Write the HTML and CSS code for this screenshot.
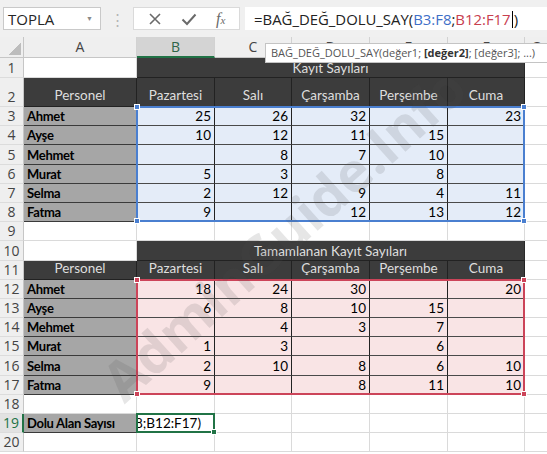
FILE: index.html
```html
<!DOCTYPE html>
<html lang="tr">
<head>
    <meta charset="UTF-8">
    <title>BAĞ_DEĞ_DOLU_SAY</title>
    <meta name="viewport" content="width=device-width, initial-scale=1.0">
    <link rel="stylesheet" href="styles.css">
</head>
<body>
    <div class="formula-bar">
        <div class="name-box">
            <span>TOPLA</span>
            <span class="name-arrow">▼</span>
        </div>
        <div class="grip">⋮</div>
        <div class="fx-buttons">
            <svg width="14" height="14" viewBox="0 0 14 14">
                <path d="M2 2 L12 12 M12 2 L2 12" stroke="#6a6a6a" stroke-width="1.6" fill="none"/>
            </svg>
            <svg width="16" height="14" viewBox="0 0 16 14">
                <path d="M1.5 7.5 L6 12 L14.5 2.5" stroke="#6a6a6a" stroke-width="2" fill="none"/>
            </svg>
            <span class="fx">f<span class="fx-x">x</span></span>
        </div>
        <div class="formula-input">
            <span>=BAĞ_DEĞ_DOLU_SAY(<span class="ref-blue">B3:F8</span>;<span class="ref-red">B12:F17</span><span class="caret"></span>)</span>
        </div>
    </div>

    <div class="sheet">
        <div class="cells" id="cells"></div>

        <!-- formül düzenlenirken renkli aralık çerçeveleri -->
        <div class="marks">
            <div class="range range-blue">
                <i class="h tl"></i><i class="h tr"></i><i class="h bl"></i><i class="h br"></i>
            </div>
            <div class="range range-red">
                <i class="h tl"></i><i class="h tr"></i><i class="h bl"></i><i class="h br"></i>
            </div>
            <div class="range range-active">
                <i class="h br"></i>
            </div>
        </div>

        <div class="tooltip">BAĞ_DEĞ_DOLU_SAY(değer1; <b>[değer2]</b>; [değer3]; ...)</div>
        <div class="watermark">AdminGuide.Info</div>
    </div>

    <script>
        const days = ['Pazartesi', 'Salı', 'Çarşamba', 'Perşembe', 'Cuma'];
        const tables = [
            {
                title: 'Kayıt Sayıları',
                tint: 'blue',
                rows: [
                    ['Ahmet', 25, 26, 32, '', 23],
                    ['Ayşe', 10, 12, 11, 15, ''],
                    ['Mehmet', '', 8, 7, 10, ''],
                    ['Murat', 5, 3, '', 8, ''],
                    ['Selma', 2, 12, 9, 4, 11],
                    ['Fatma', 9, '', 12, 13, 12]
                ]
            },
            {
                title: 'Tamamlanan Kayıt Sayıları',
                tint: 'pink',
                rows: [
                    ['Ahmet', 18, 24, 30, '', 20],
                    ['Ayşe', 6, 8, 10, 15, ''],
                    ['Mehmet', '', 4, 3, 7, ''],
                    ['Murat', 1, 3, '', 6, ''],
                    ['Selma', 2, 10, 8, 6, 10],
                    ['Fatma', 9, '', 8, 11, 10]
                ]
            }
        ];

        const grid = document.getElementById('cells');
        let rowNo = 0;

        function add(cls, text) {
            const el = document.createElement('div');
            el.className = 'cell ' + cls;
            if (text !== undefined && text !== '') {
                el.textContent = text;
            }
            grid.appendChild(el);
            return el;
        }

        function newRow(extra) {
            rowNo++;
            add('row-head' + (extra ? ' ' + extra : ''), rowNo);
        }

        function blankRow() {
            newRow();
            for (let i = 0; i < 6; i++) add('blank');
            add('blank last');
        }

        // sütun başlıkları
        add('corner').innerHTML = '<span class="corner-tri"></span>';
        ['A', 'B', 'C', 'D', 'E', 'F', 'G'].forEach(c => {
            add('col-head' + (c === 'B' ? ' sel' : '') + (c === 'G' ? ' last' : ''), c);
        });

        tables.forEach((t, i) => {
            if (i > 0) blankRow();
            newRow();
            add('blank');
            add('title', t.title);
            add('blank last');

            newRow('tall');
            add('head', 'Personel');
            days.forEach(d => add('head', d));
            add('blank last');

            t.rows.forEach(r => {
                newRow();
                add('name', r[0]);
                r.slice(1).forEach(v => add('num ' + t.tint, v));
                add('blank last');
            });
        });

        blankRow();

        newRow('active');
        add('name', 'Dolu Alan Sayısı');
        add('editing').innerHTML = '<span>=BAĞ_DEĞ_DOLU_SAY(B3:F8;B12:F17)</span>';
        for (let i = 0; i < 4; i++) add('blank');
        add('blank last');

        blankRow();
    </script>
</body>
</html>
```

FILE: styles.css
```css
* {
    box-sizing: border-box;
}
body {
    margin: 0;
    width: 547px;
    height: 454px;
    overflow: hidden;
    background: #fff;
    font-family: "Open Sans", "Noto Sans", sans-serif;
}

/* formül çubuğu */
.formula-bar {
    display: flex;
    align-items: center;
    height: 37px;
    padding-left: 3px;
    background: #f0f0f0;
}
.name-box {
    display: flex;
    align-items: center;
    justify-content: space-between;
    width: 98px;
    height: 23px;
    padding: 0 7px 0 4px;
    background: #fff;
    border: 1px solid #c9c9c9;
    font-size: 15px;
    color: #262626;
}
.name-arrow {
    font-size: 7px;
    color: #8a8a8a;
}
.grip {
    width: 32px;
    text-align: center;
    font-size: 15px;
    color: #b5b5b5;
}
.fx-buttons {
    display: flex;
    align-items: center;
    justify-content: space-around;
    width: 107px;
    height: 23px;
    padding: 0 4px;
    background: #fff;
    border: 1px solid #dadada;
}
.fx {
    font-family: "Liberation Serif", serif;
    font-style: italic;
    font-size: 16px;
    color: #6a6a6a;
}
.fx-x {
    font-size: 11px;
}
.formula-input {
    flex: 1;
    display: flex;
    align-items: center;
    height: 23px;
    margin-left: 5px;
    padding-left: 9px;
    background: #fff;
    font-size: 14.9px;
    color: #222;
    white-space: nowrap;
}
.ref-blue {
    color: #3f6fc7;
}
.ref-red {
    color: #c8404f;
}
.caret {
    display: inline-block;
    width: 1px;
    height: 17px;
    margin: 0 1px -3px 1px;
    background: #000;
}

/* tablo */
.sheet {
    position: relative;
    display: grid;
}
.cells,
.marks {
    grid-area: 1 / 1;
    display: grid;
    grid-template-columns: 24px 113px 78px 77px 78px 78px 77px 1fr;
    grid-template-rows: 21px 20px 29px repeat(18, 19.2px);
}
.cell {
    display: flex;
    align-items: flex-end;
    padding: 0 3px 1px 3px;
    border-right: 1px solid #dadada;
    border-bottom: 1px solid #dadada;
    font-family: Lato, "Liberation Sans", sans-serif;
    font-size: 13.5px;
    line-height: 16px;
    color: #000;
    white-space: nowrap;
    overflow: hidden;
}
.cell.last {
    border-right: none;
}
.corner {
    align-items: flex-end;
    justify-content: flex-end;
    padding: 0 2px 2px 0;
    background: #efefef;
    border-right-color: #c6c6c6;
    border-bottom-color: #c6c6c6;
}
.corner-tri {
    width: 12px;
    height: 12px;
    background: linear-gradient(135deg, transparent 50%, #bdbdbd 50%);
}
.col-head {
    align-items: center;
    justify-content: center;
    padding: 0;
    background: #efefef;
    border-right-color: #d2d2d2;
    border-bottom-color: #c6c6c6;
    font-family: "Open Sans", sans-serif;
    font-size: 14px;
    color: #444;
}
.col-head.sel {
    background: #d4d4d4;
    border-bottom: 2px solid #217346;
    color: #2f6548;
}
.row-head {
    justify-content: center;
    padding: 0;
    background: #efefef;
    border-right-color: #c6c6c6;
    border-bottom-color: #dcdcdc;
    font-family: "Open Sans", sans-serif;
    font-size: 14px;
    line-height: 18px;
    color: #444;
}
.row-head.active {
    background: #e2e2e2;
    border-right: 2px solid #217346;
    color: #217346;
}
.title {
    grid-column: span 5;
    justify-content: center;
    background: #3c3c3c;
    border-right-color: #2a2a2a;
    border-bottom-color: #222;
    color: #dedede;
}
.head {
    justify-content: center;
    padding-bottom: 3px;
    background: #3c3c3c;
    border-right-color: #222;
    border-bottom-color: #222;
    color: #dedede;
}
.name {
    background: #a6a6a6;
    border-right-color: #3a3a3a;
    border-bottom-color: #3a3a3a;
    font-size: 13px;
    font-weight: bold;
    letter-spacing: -0.3px;
}
.num {
    justify-content: flex-end;
    border-right-color: #222;
    border-bottom-color: #4a4a4a;
}
.num.blue {
    background: #e4ecf8;
}
.num.pink {
    background: #f9e4e5;
}
.editing {
    justify-content: flex-end;
    padding-right: 13px;
}

/* seçim çerçeveleri */
.marks {
    pointer-events: none;
    z-index: 2;
}
.range {
    position: relative;
    margin: -1px 0 0 -1px;
    border: 2px solid currentColor;
}
.range-blue {
    grid-row: 4 / 10;
    grid-column: 3 / 8;
    color: #4a7fd0;
}
.range-red {
    grid-row: 13 / 19;
    grid-column: 3 / 8;
    color: #cc4459;
}
.range-active {
    grid-row: 20 / 21;
    grid-column: 3 / 4;
    color: #217346;
}
.h {
    position: absolute;
    width: 6px;
    height: 6px;
    background: currentColor;
    border: 1px solid #fff;
}
.h.tl { top: -4px; left: -4px; }
.h.tr { top: -4px; right: -4px; }
.h.bl { bottom: -4px; left: -4px; }
.h.br { bottom: -4px; right: -4px; }

/* ipucu kutusu */
.tooltip {
    position: absolute;
    top: 6px;
    left: 265px;
    right: -4px;
    z-index: 3;
    height: 20px;
    padding: 0 5px;
    background: #fff;
    border: 1px solid #c4c4c4;
    font-size: 11px;
    line-height: 18px;
    color: #555;
    white-space: nowrap;
    overflow: hidden;
}
.tooltip b {
    color: #333;
}

.watermark {
    position: absolute;
    left: 283px;
    top: 196px;
    z-index: 4;
    transform: translate(-50%, -50%) rotate(-42deg);
    font-family: "Open Sans", sans-serif;
    font-weight: bold;
    font-size: 55px;
    color: rgba(80, 80, 80, 0.14);
    white-space: nowrap;
    pointer-events: none;
}
```
